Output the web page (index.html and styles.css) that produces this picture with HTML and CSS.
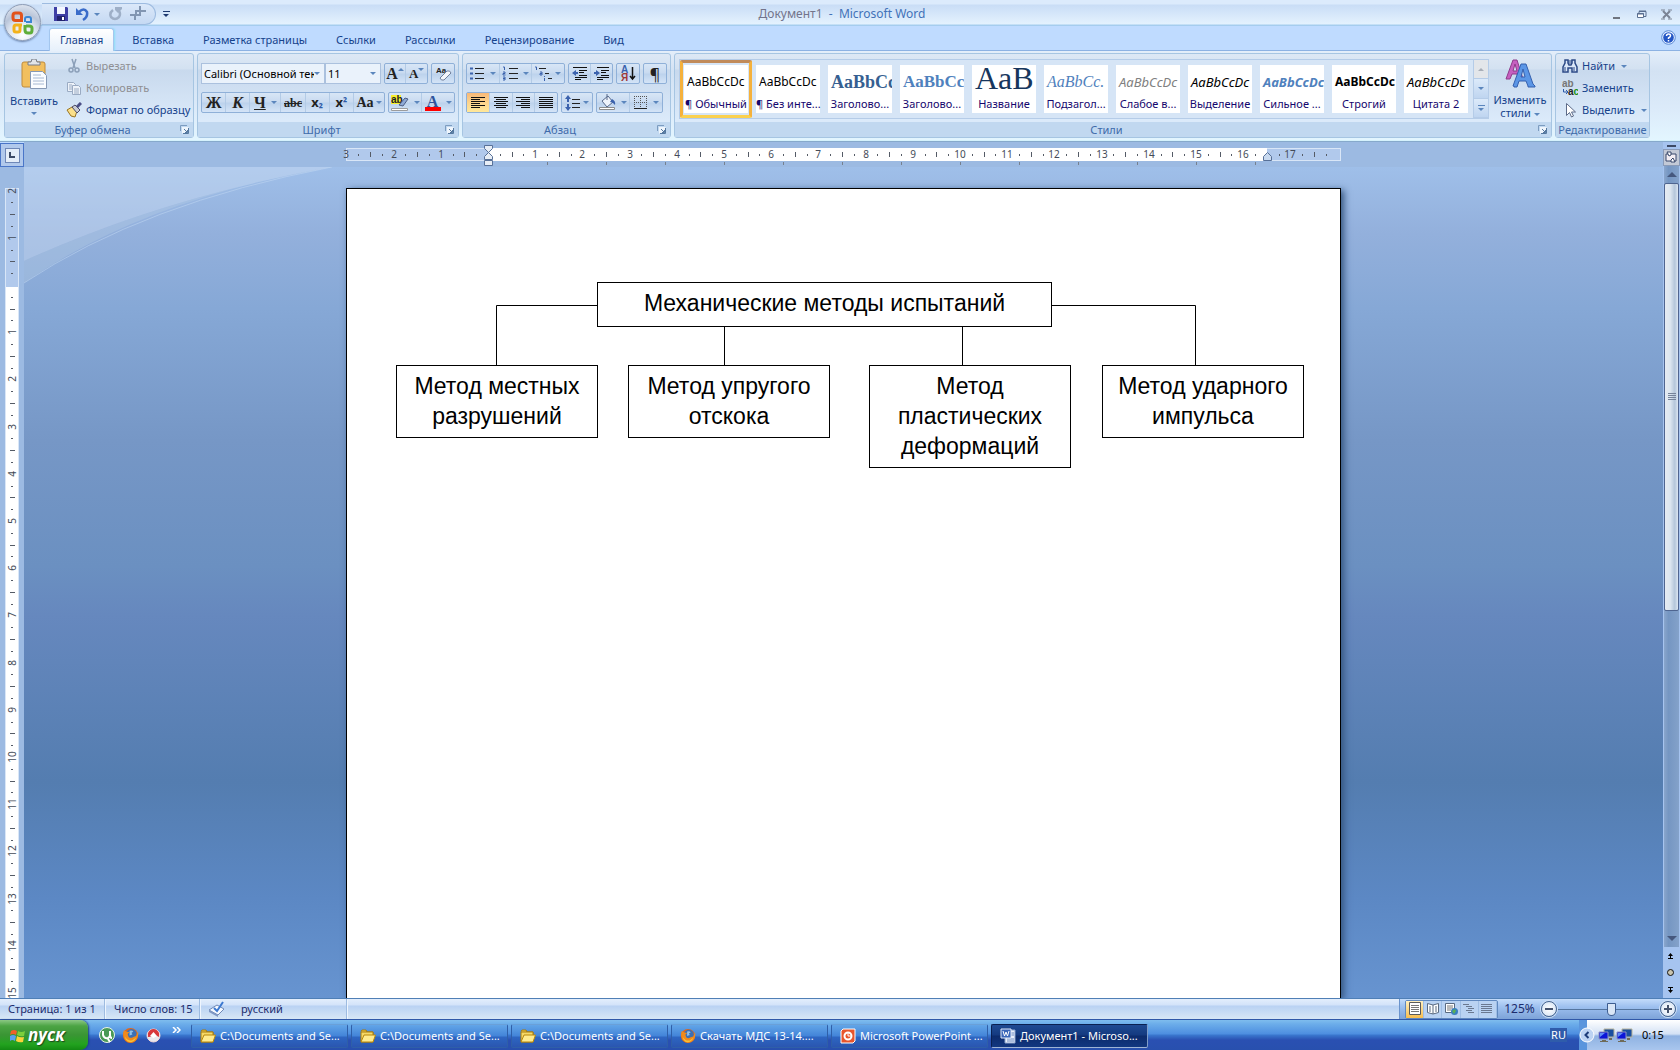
FILE: index.html
```html
<!DOCTYPE html>
<html lang="ru">
<head>
<meta charset="utf-8">
<title>Документ1 - Microsoft Word</title>
<link rel="stylesheet" href="styles.css">
</head>
<body>
<svg class="defs" aria-hidden="true">
  <defs>
    <symbol id="folder" viewBox="0 0 16 16"><path d="M1 3.500 2 2h4l1 2h6v3" fill="#f0c83c" stroke="#a87a10"/><path d="M1 14V4h12v10z" fill="#f5d867" stroke="#a87a10"/><path d="M1 14 4 7h11.500l-2.500 7z" fill="#ffeb8f" stroke="#b8860b"/></symbol>
    <symbol id="firefox" viewBox="0 0 18 18"><circle cx="9" cy="9" r="8" fill="#e0661a"/><circle cx="10" cy="7.500" r="5.500" fill="#3c6fb5"/><path d="M8 4q3-1 4 1l-2 1 1 2-3 1z" fill="#8fc0ea"/><path d="M2 3.500 5 5l3 .5-2 2 1 3q2 2 5 0l3-1 2-5q1 8-4 11-6 3-10-2-3-5-1-10z" fill="#f08a1c"/><path d="M3 10q3 5 8 4l4-3q-2 5-7 5-4-1-5-6z" fill="#f8c23a"/></symbol>
    <symbol id="net" viewBox="0 0 17 15"><path d="M6 1h10v8H6z" fill="#1a4fa0" stroke="#b9b49a"/><path d="M1 4h9v7H1z" fill="#0b15d8" stroke="#8d94c2"/><path d="m2 5 5 0-5 4z" fill="#5f8cf5"/><path d="M4 12h4v1h2v1H2v-1h2zM11 10h3v2h-3z" fill="#6f6b58"/></symbol>
    <symbol id="launch" viewBox="0 0 9 9"><path d="M.5 6V.5H7" fill="none" stroke="#7c9cc0"/><path d="M2 2h6.500v6.500H2z" fill="#eef5fc"/><path d="M8.500 3v5.500H3M4 4l3.500 3.500M7.500 5v2.500H5" fill="none" stroke="#55789f"/></symbol>
  </defs>
</svg>

<header class="titlebar">
  <div class="qat-wrap">
    <div class="qat">
      <button aria-label="Сохранить"><svg width="14" height="14" viewBox="0 0 14 14"><path d="M0 0h13l1 1v13H0z" fill="#3f3fa5"/><path d="M3 0h8v7H3z" fill="#f4f7ff"/><path d="M3 9h8v5H3z" fill="#23236e"/><path d="M8 10h2v3H8z" fill="#fff"/></svg></button>
      <button aria-label="Отменить"><svg width="13" height="15" viewBox="0 0 13 15"><path d="M3 5q5-5 8 0 1 5-4 8" fill="none" stroke="#3a6cc9" stroke-width="2.500"/><path d="M0 1v7h7z" fill="#3a6cc9"/></svg></button>
      <i class="caret qat-caret"></i>
      <button aria-label="Повторить"><svg width="13" height="14" viewBox="0 0 13 14"><path d="M4 3q-4 3-2 7 4 4 8 0 2-3 0-6" fill="none" stroke="#9eafc7" stroke-width="2.500"/><path d="M6 0h7v2L9 6 6 3z" fill="#9eafc7"/></svg></button>
      <button aria-label="Соединить"><svg width="16" height="16" viewBox="0 0 16 16"><path d="M0 9h5v5M6 5v4H5M5 5h11M10 0v9H5" fill="none" stroke="#8296b2" stroke-width="2"/></svg></button>
    </div>
    <button class="qat-more" aria-label="Настройка панели"><i class="line"></i><i class="caret dark"></i></button>
  </div>
  <h1 class="title"><span>Документ1</span> &nbsp;-&nbsp; Microsoft Word</h1>
  <div class="winbtns">
    <button aria-label="Свернуть"><svg width="11" height="11"><path d="M2 9h7" stroke="#6f7580" stroke-width="2"/></svg></button>
    <button aria-label="Восстановить"><svg width="11" height="11"><path d="M3 4V2.500h7v5H8M3 2h7" fill="none" stroke="#5a6f90"/><path d="M1.500 4.500h6v4h-6zM1 5h7" fill="#fff" stroke="#5a6f90"/></svg></button>
    <button aria-label="Закрыть"><svg width="11" height="11"><path d="m2 2 7 7M9 2 2 9" stroke="#7b8494" stroke-width="2"/><path d="M0 1h4M7 1h4M0 10h4M7 10h4" stroke="#7b8494"/></svg></button>
  </div>
</header>
<button class="office" aria-label="Кнопка Office"><svg width="24" height="24" viewBox="0 0 24 24" fill="none" stroke-width="3"><path d="M11 9.500H4.500Q2 9.500 2 7V4.500Q2 2 4.500 2H8q2.500 0 2.500 2.500V11" stroke="#e2531b"/><path d="M14 11V8q0-2 2-2h2q2 0 2 2v3h-5" stroke="#3a86d4" stroke-width="2"/><path d="M11 14H5q-2 0-2 2v3q0 2 2 2h2q2 0 2-2v-4" stroke="#f3b21b"/><path d="M14 14v5q0 3 3 3h2q2 0 2-3v-2q0-2-3-2h-3" stroke="#5fae3a"/></svg></button>

<nav class="tabs">
  <button class="tab active">Главная</button><button class="tab">Вставка</button><button class="tab">Разметка страницы</button><button class="tab">Ссылки</button><button class="tab">Рассылки</button><button class="tab">Рецензирование</button><button class="tab">Вид</button>
  <button class="help" aria-label="Справка"><svg width="15" height="15" viewBox="0 0 15 15"><circle cx="7.500" cy="7.500" r="6.800" fill="#e6f0ff" stroke="#5b8ad6"/><circle cx="7.500" cy="7.500" r="5.300" fill="#2456c5"/><path d="M5.500 6q0-2 2-2t2 1.700q0 1-2 2.300v1M7.500 10v1.500" fill="none" stroke="#fff" stroke-width="1.500"/></svg></button>
</nav>

<section class="ribbon">
  <section class="group g-clip">
    <div class="body clip">
      <button class="big paste"><svg width="27" height="30" viewBox="0 0 27 30"><rect x="1" y="3" width="23" height="25" rx="2" fill="#f2bf5e" stroke="#bf8b3a"/><path d="M7 6V3h3l1-3h4l1 3h3v3z" fill="#e1e4e8" stroke="#767d88"/><path d="M9.500 12.500h12l4 4v13h-16z" fill="#fbfdff" stroke="#8699b5"/><path d="M12 16h8M12 19h11M12 22h11M12 25h11" stroke="#a6b8d2"/></svg><span>Вставить</span><i class="caret"></i></button>
      <div class="list">
        <button class="off"><svg width="16" height="16" viewBox="0 0 16 16" fill="none" stroke="#8b9fb8" stroke-width="1.500"><path d="m6 1 3 9M10 1 7 10"/><circle cx="5" cy="12" r="2"/><circle cx="11" cy="12" r="2"/></svg>Вырезать</button>
        <button class="off"><svg width="16" height="16" viewBox="0 0 16 16" fill="#eef3fa" stroke="#9aabc3"><path d="M1.500 2.500h6l2 2v7h-8z"/><path d="M6.500 5.500h6l2 2v7h-8zM8 9h5M8 11h5M8 13h5M3 5h3M3 7h3M3 9h3"/></svg>Копировать</button>
        <button><svg width="16" height="16" viewBox="0 0 16 16"><path d="m1 8 5-3 5 4-2 6-4-1z" fill="#fbe08a" stroke="#9a7420"/><path d="m6 5 3-2 5 5-3 3z" fill="#c9ccd4" stroke="#4c4c66"/><path d="m11 5 4-4" stroke="#4a4f86" stroke-width="3"/></svg>Формат по образцу</button>
      </div>
    </div>
    <footer><span>Буфер обмена</span><svg width="9" height="9"><use href="#launch"/></svg></footer>
  </section>

  <section class="group g-font">
    <div class="body rows">
      <div class="row">
        <label class="combo c-font"><select aria-label="Шрифт"><option>Calibri (Основной текст)</option></select><i class="caret"></i></label>
        <label class="combo c-size"><select aria-label="Размер"><option>11</option></select><i class="caret"></i></label>
        <div class="set s45 gap"><button class="serif" aria-label="Увеличить размер"><b class="f16">A</b><i class="caret up sup"></i></button><button class="serif" aria-label="Уменьшить размер"><b class="f13">A</b><i class="caret sup"></i></button></div>
        <div class="set s24 gap"><button aria-label="Очистить формат"><svg width="17" height="17" viewBox="0 0 17 17"><text x="1" y="8" class="t8">Aa</text><path d="m5 13 7-7q3-1 4 2l-7 7q-3 1-4-2z" fill="#f2f5fb" stroke="#6f7f9c"/></svg></button></div>
      </div>
      <div class="row">
        <div class="set s184">
          <button class="serif"><b class="f16">Ж</b></button><button class="serif"><b class="f16"><em>К</em></b></button><button class="serif drop"><b class="f16"><u>Ч</u></b><i class="caret"></i></button><button class="serif"><b class="f12"><s>abc</s></b></button><button><b class="f13">x<small>₂</small></b></button><button><b class="f13">x<small>²</small></b></button><button class="serif drop tight"><b class="f14">Aa</b><i class="caret"></i></button>
        </div>
        <div class="set s67 gap">
          <button class="drop" aria-label="Цвет выделения"><svg width="18" height="18" viewBox="0 0 18 18"><path d="M0 1h10v9H0z" fill="#f7f02c"/><text x="0" y="9" class="t10">ab</text><path d="m8 11 6-7 3 1-5 7z" fill="#8fa9d6" stroke="#4d5f86"/><path d="M.5 14.500h16v2H.5z" fill="#fff" stroke="#9c9c9c"/></svg><i class="caret"></i></button>
          <button class="drop" aria-label="Цвет текста"><span class="fcolor serif">A</span><i class="caret"></i></button>
        </div>
      </div>
    </div>
    <footer><span>Шрифт</span><svg width="9" height="9"><use href="#launch"/></svg></footer>
  </section>

  <section class="group g-para">
    <div class="body rows">
      <div class="row">
        <div class="set s99">
          <button class="drop" aria-label="Маркеры"><svg width="16" height="15" viewBox="0 0 16 15"><path d="M6 2.500h9M6 7.500h9M6 12.500h9" stroke="#222"/><path d="M1 1.500h3v2H1zM1 6.500h3v2H1zM1 11.500h3v2H1z" fill="#3b62ad"/></svg><i class="caret"></i></button>
          <button class="drop" aria-label="Нумерация"><svg width="16" height="15" viewBox="0 0 16 15"><path d="M7 2.500h9M7 7.500h9M7 12.500h9" stroke="#222"/><path d="M1 1h1.500v3M1 6h2v1.500H1V9h2.500M1 11h2v3H1M1 12.500h2" fill="none" stroke="#3b62ad"/></svg><i class="caret"></i></button>
          <button class="drop tight" aria-label="Многоуровневый список"><svg width="18" height="15" viewBox="0 0 18 15"><path d="M4 2.500h7M10 7.500h4M13 12.500h4" stroke="#222"/><path d="M0 1h1.500v3M5 6h2v3H5V7.500h2M9.500 10v1M9.500 12v3" fill="none" stroke="#3b62ad"/></svg><i class="caret"></i></button>
        </div>
        <div class="set s45 gap">
          <button aria-label="Уменьшить отступ"><svg width="16" height="15" viewBox="0 0 16 15"><path d="M1 1.500h14M7 4.500h8M7 6.500h5M7 9.500h8M3 11.500h12M3 13.500h6" stroke="#111"/><path d="m0 7 4-3v2h2v2H4v2z" fill="#3b62ad"/></svg></button>
          <button aria-label="Увеличить отступ"><svg width="16" height="15" viewBox="0 0 16 15"><path d="M3 1.500h12M7 4.500h8M7 6.500h5M7 9.500h8M3 11.500h12M3 13.500h6" stroke="#111"/><path d="M6 7 2 4v2H0v2h2v2z" fill="#3b62ad"/></svg></button>
        </div>
        <div class="set s24 gap"><button aria-label="Сортировка"><svg width="16" height="17" viewBox="0 0 16 17"><text x="1" y="8" class="t10 blue">А</text><text x="1" y="16" class="t10 red">Я</text><path d="M12.500 2v12M10 11l2.500 3 2.500-3" fill="none" stroke="#111" stroke-width="1.500"/></svg></button></div>
        <div class="set s24 gap"><button aria-label="Знаки абзаца"><b class="f16 pil">¶</b></button></div>
      </div>
      <div class="row">
        <div class="set s92">
          <button class="on" aria-label="По левому краю"><svg width="14" height="13"><path d="M0 1.500h14M0 3.500h9M0 5.500h14M0 7.500h9M0 9.500h14M0 11.500h9" stroke="#111"/></svg></button>
          <button aria-label="По центру"><svg width="14" height="13"><path d="M0 1.500h14M2 3.500h10M0 5.500h14M2 7.500h10M0 9.500h14M2 11.500h10" stroke="#111"/></svg></button>
          <button aria-label="По правому краю"><svg width="14" height="13"><path d="M0 1.500h14M5 3.500h9M0 5.500h14M5 7.500h9M0 9.500h14M5 11.500h9" stroke="#111"/></svg></button>
          <button aria-label="По ширине"><svg width="14" height="13"><path d="M0 1.500h14M0 3.500h14M0 5.500h14M0 7.500h14M0 9.500h14M0 11.500h14" stroke="#111"/></svg></button>
        </div>
        <div class="set s32 gap"><button class="drop tight" aria-label="Интервал"><svg width="16" height="16" viewBox="0 0 16 16"><path d="M7 4.500h8M7 8.500h8M7 12.500h8" stroke="#222"/><path d="m3 0 3 4H4v3H2V4H0zM3 16l3-4H4V9H2v3H0z" fill="#3b62ad"/></svg><i class="caret"></i></button></div>
        <div class="set s67 gap">
          <button class="drop" aria-label="Заливка"><svg width="17" height="17" viewBox="0 0 17 17"><path d="m3 7 6-5 5 6-6 5z" fill="#eef3fb" stroke="#56688a"/><path d="M8 0v6" stroke="#56688a"/><path d="M13 5q4 2 3 6-2-3-5-3z" fill="#3b62ad"/><path d="M.5 13.500h15v2H.5z" fill="#fff" stroke="#8c8c8c"/></svg><i class="caret"></i></button>
          <button class="drop" aria-label="Границы"><svg width="14" height="14"><path d="M.5 0v12M6.500 0v12M12.500 0v12M0 .5h13M0 6.500h13" stroke="#555" stroke-dasharray="1 1"/><path d="M0 12.500h13" stroke="#222"/></svg><i class="caret"></i></button>
        </div>
      </div>
    </div>
    <footer><span>Абзац</span><svg width="9" height="9"><use href="#launch"/></svg></footer>
  </section>

  <section class="group g-styles">
    <div class="body styles">
      <div class="gallery">
        <button class="style sel"><span class="smp">AaBbCcDc</span><span class="nm">¶ Обычный</span></button>
        <button class="style"><span class="smp">AaBbCcDc</span><span class="nm">¶ Без инте...</span></button>
        <button class="style"><span class="smp h1s">AaBbCc</span><span class="nm">Заголово...</span></button>
        <button class="style"><span class="smp h2s">AaBbCc</span><span class="nm">Заголово...</span></button>
        <button class="style"><span class="smp ttl">AaB</span><span class="nm">Название</span></button>
        <button class="style"><span class="smp sub">AaBbCc.</span><span class="nm">Подзагол...</span></button>
        <button class="style"><span class="smp weak">AaBbCcDc</span><span class="nm">Слабое в...</span></button>
        <button class="style"><span class="smp ital">AaBbCcDc</span><span class="nm">Выделение</span></button>
        <button class="style"><span class="smp strong">AaBbCcDc</span><span class="nm">Сильное ...</span></button>
        <button class="style"><span class="smp bold">AaBbCcDc</span><span class="nm">Строгий</span></button>
        <button class="style"><span class="smp ital">AaBbCcDc</span><span class="nm">Цитата 2</span></button>
        <div class="gscroll"><button class="dis" aria-label="Вверх"><i class="caret up"></i></button><button aria-label="Вниз"><i class="caret"></i></button><button aria-label="Ещё"><i class="line"></i><i class="caret"></i></button></div>
      </div>
      <button class="big change"><svg width="31" height="29" viewBox="0 0 31 29"><path d="M1 20 8 1h4l6 19h-4l-2-5H7l-2 5zM8 12h4l-2-7z" fill="#c65fc0" stroke="#8e3a8a"/><path d="M9 27h-1l8-22h5l7 20 2 2v1h-7v-1l-2-5h-7l-2 6H9zM16 18h4l-2-8z" fill="#5b96e6" stroke="#3560ae"/></svg><span>Изменить</span><span>стили <i class="caret"></i></span></button>
    </div>
    <footer><span>Стили</span><svg width="9" height="9"><use href="#launch"/></svg></footer>
  </section>

  <section class="group g-edit">
    <div class="body list">
      <button><svg width="16" height="16" viewBox="0 0 16 16"><path d="M3 2h3v3l1 2h2l1-2V2h3v3l2 4v5h-5v-4H6v4H1V9l2-4z" fill="#dce8f8" stroke="#2d4a86" stroke-width="1.500"/><path d="M3 9v4M12 9v4M7 2v4M9 2v4" stroke="#2d4a86"/></svg>Найти<i class="caret"></i></button>
      <button><svg width="16" height="16" viewBox="0 0 16 16"><text x="0" y="7" class="t10 grey">ab</text><text x="6" y="15" class="t10">a<tspan fill="#189018">c</tspan></text><path d="M1.500 9v3h4M4 10l2 2-2 2" fill="none" stroke="#2d5aa8"/></svg>Заменить</button>
      <button><svg width="16" height="16" viewBox="0 0 16 16"><path d="M4.500 1.500v12l3-3 2 4.500 2-1-2-4h4z" fill="#fff" stroke="#5d6b88"/></svg>Выделить<i class="caret"></i></button>
    </div>
    <footer><span>Редактирование</span></footer>
  </section>
</section>

<main class="work">
  <button class="tabstop" aria-label="Позиция табуляции"><span><svg width="6" height="6"><path d="M1 0v5h5" fill="none" stroke="#3c4a66" stroke-width="2"/></svg></span></button>
  <div class="hruler"><svg id="hr" width="995" height="25"></svg></div>
  <div class="vruler"><svg id="vr" width="24" height="900"></svg></div>
  <div class="canvas">
    <svg class="swoosh" width="330" height="120" viewBox="0 0 330 120"><path d="M0 0H308Q140 30 0 94z" fill="#d3e2f5" opacity=".4"/><path d="M308 0Q120 32 0 116V94Q140 30 308 0z" fill="#b7cfe6" opacity=".35"/><path d="M308 0Q120 36 0 116" fill="none" stroke="#c4daf3" opacity=".5"/></svg>
    <article class="page">
      <svg class="wires" width="993" height="300"><path d="M250 116.500H149.500V176M377.500 137v39M615.500 137v39M705 116.500h143.500V176" fill="none" stroke="#000"/></svg>
      <div class="node n0">Механические методы испытаний</div>
      <div class="node n1">Метод местных разрушений</div>
      <div class="node n2">Метод упругого отскока</div>
      <div class="node n3">Метод пластических деформаций</div>
      <div class="node n4">Метод ударного импульса</div>
    </article>
  </div>
  <aside class="vscroll">
    <i class="split"></i>
    <button class="rtoggle" aria-label="Линейка"><svg width="13" height="13" viewBox="0 0 13 13"><path d="M1 3h10v7H1z" fill="#f3eef4" stroke="#37476a" stroke-width="1"/><path d="M2 1h4v3l-2 1zM6 9l2-2 2 4H6z" fill="#fff" stroke="#37476a"/></svg></button>
    <div class="track">
      <button aria-label="Вверх"><i class="tri up"></i></button>
      <div class="thumb"><svg width="8" height="8"><path d="M0 .5h8M0 2.500h8M0 4.500h8M0 6.500h8" stroke="#76839a"/></svg></div>
      <span class="fill"></span>
      <button aria-label="Вниз"><i class="tri"></i></button>
    </div>
    <div class="browse">
      <button aria-label="Предыдущая страница"><svg width="5" height="6"><path d="M2.500 0 5 3H3v2h2v1H0V5h2V3H0z"/></svg></button>
      <button aria-label="Выбор объекта"><svg width="7" height="7"><circle cx="3.500" cy="3.500" r="3" fill="#c9c4ae" stroke="#111"/></svg></button>
      <button aria-label="Следующая страница"><svg width="5" height="6"><path d="M2.500 6 0 3h2V1H0V0h5v1H3v2h2z"/></svg></button>
    </div>
  </aside>
</main>

<footer class="status">
  <span class="cell s-page">Страница: 1 из 1</span><span class="cell s-words">Число слов: 15</span><span class="cell s-lang"><svg width="17" height="16" viewBox="0 0 17 16"><path d="m1 9 8-5 7 4-6 6z" fill="#f5f9ff" stroke="#6f88b5"/><path d="m1 9 9 5v2L1 11z" fill="#7f98c4"/><path d="m6 7 3 3 6-9" fill="none" stroke="#3b78d0" stroke-width="2"/></svg>русский</span>
  <span class="grow"></span>
  <div class="zoombar">
    <div class="views">
      <button class="on" aria-label="Разметка страницы"><svg width="12" height="14"><path d="M.5.500h11v12H.5z" fill="#fff" stroke="#5a5a5a"/><path d="M2 3.500h8M2 5.500h8M2 7.500h8M2 9.500h8" stroke="#777"/></svg></button>
      <button aria-label="Режим чтения"><svg width="12" height="14"><path d="M.5 1.500 6 3l5.500-1.500v9L6 12 .5 10.500zM6 3v9" fill="#fff" stroke="#5a6a80"/><path d="M2 5h2M2 7h2M2 9h2M8 5h2M8 7h2M8 9h2" stroke="#5a6a80"/></svg></button>
      <button aria-label="Веб-документ"><svg width="13" height="14"><path d="M.5 1.500h9v9h-9z" fill="#fff" stroke="#5a6a80"/><path d="M2 4h6M2 6h6M2 8h4" stroke="#777"/><circle cx="9.500" cy="9.500" r="3.500" fill="#3a7fc0"/><path d="m7 9 3-2 1 2-2 3z" fill="#58b058"/></svg></button>
      <button aria-label="Структура"><svg width="12" height="14"><path d="M0 2.500h6M3 4.500h6M5 6.500h6M3 8.500h6M5 10.500h6" stroke="#6a7890"/></svg></button>
      <button aria-label="Черновик"><svg width="12" height="14"><path d="M0 2.500h11M0 4.500h11M0 6.500h11M0 8.500h11M0 10.500h11" stroke="#6a7890"/></svg></button>
    </div>
    <button class="pct">125%</button>
    <button class="round" aria-label="Уменьшить"><i class="minus"></i></button>
    <input class="zoom" type="range" min="0" max="200" value="106" aria-label="Масштаб">
    <button class="round plus" aria-label="Увеличить"><i class="minus"></i></button>
  </div>
</footer>

<footer class="taskbar">
  <button class="start"><svg width="15" height="15" viewBox="0 0 15 15"><path d="M1 3q3-2 6 0L6 7Q3 5 0 7z" fill="#f0602a"/><path d="M8 3q3 2 7 0l-1 5q-4 1-7-1z" fill="#7ccf3c"/><path d="M0 8q3-2 6 0l-1 5q-3-2-5 0z" fill="#5aa0f0"/><path d="M7 8q3 2 7 1l-1 5q-4 1-7-1z" fill="#fbd33a"/></svg>пуск</button>
  <div class="quick">
    <a href="#" aria-label="uTorrent"><svg width="16" height="16" viewBox="0 0 16 16"><circle cx="8" cy="8" r="7.500" fill="#4a9a56" stroke="#e8f4e8"/><path d="M4 4v4q1 4 5 3 2-1 2-3V4M11 8q0 3 2 3M9 12l2 3" fill="none" stroke="#fff" stroke-width="2"/></svg></a>
    <a href="#" aria-label="Firefox"><svg width="17" height="17"><use href="#firefox"/></svg></a>
    <a href="#" aria-label="Проигрыватель"><svg width="15" height="15" viewBox="0 0 15 15"><circle cx="7.500" cy="7.500" r="6.500" fill="#e9e9ee" stroke="#f2d8d8"/><path d="M2 9V5q2-4 5.500-4T13 5v4q-3-2-5.500-1T2 9z" fill="#d8383c"/><path d="M7.500 4 11 8l-3.500 2L4 8z" fill="#fff"/></svg></a>
  </div>
  <button class="more" aria-label="Ещё"><svg width="9" height="6"><path d="m1 0 3 3-3 3M5 0l3 3-3 3" fill="none" stroke="#fff" stroke-width="1.500"/></svg></button>
  <nav class="tasks">
    <button><svg width="16" height="16"><use href="#folder"/></svg>C:\Documents and Se...</button>
    <button><svg width="16" height="16"><use href="#folder"/></svg>C:\Documents and Se...</button>
    <button><svg width="16" height="16"><use href="#folder"/></svg>C:\Documents and Se...</button>
    <button><svg width="16" height="16"><use href="#firefox"/></svg>Скачать МДС 13-14....</button>
    <button><svg width="16" height="16" viewBox="0 0 16 16"><path d="M3 1h12v12l-2 2H1V3z" fill="#e8552c" stroke="#fff"/><circle cx="8" cy="8" r="3.500" fill="none" stroke="#fff" stroke-width="2"/><path d="M8 8h4M8 8V4" stroke="#fff"/></svg>Microsoft PowerPoint ...</button>
    <button class="cur"><svg width="16" height="16" viewBox="0 0 16 16"><path d="M5 2h10v13H5z" fill="#e9f0fb" stroke="#8aa3cc"/><path d="M11 5h3M11 7h3M7 11h7M7 13h7" stroke="#6f8cc0"/><path d="M1 1h10v9H1z" fill="#3a66b8" stroke="#dfe8f8"/><path d="m3 3 1.500 5L6 4l1.500 4L9 3" fill="none" stroke="#fff"/></svg>Документ1 - Microso...</button>
  </nav>
  <span class="lang">RU</span>
  <div class="tray">
    <button class="hide" aria-label="Показать значки"><svg width="16" height="16"><circle cx="8" cy="8" r="7" fill="#bcd3f3" stroke="#fff"/><path d="M9.500 5 6.500 8l3 3" fill="none" stroke="#1d3c78" stroke-width="2"/></svg></button>
    <svg width="17" height="15"><use href="#net"/></svg><svg width="17" height="15"><use href="#net"/></svg>
    <time>0:15</time>
  </div>
</footer>
<script src="rulers.js"></script>
</body>
</html>
```
FILE: rulers.js
```js
// Both rulers are drawn from one scale: centimetres at 125% zoom.
const CM = 47.2;
const rect = (x, y, w, h, fill, stroke) =>
  `<rect x="${x}" y="${y}" width="${w}" height="${h}" fill="${fill}" stroke="${stroke}"/>`;

function horizontal() {
  const zero = 142, end = 921;
  let s = rect('0.5', '6.500', 994, 12, '#b1c9ec', '#d9e6f7') + rect(zero, 6, end - zero, 13, '#fff', 'none');
  for (let q = -12; q <= 71; q++) {
    const x = Math.round(zero + q * CM / 4);
    if (q === 0 || q === 66) continue;
    if (q % 4 === 0) s += `<text x="${x}" y="16" text-anchor="middle" class="num">${Math.abs(q / 4)}</text>`;
    else if (q % 2 === 0) s += rect(x, 10, 1, 5, '#555b66', 'none');
    else s += rect(x, 12, 1, 2, '#555b66', 'none');
  }
  for (let i = 1; i <= 13; i++) s += rect(zero + i * 59, 20, 1, 3, '#76808e', 'none');
  s += `<path d="M138.500 3.500h8v3l-4 4 4 4v3h-8v-3l4-4-4-4zM138.500 18.500h8v5h-8z" fill="#e8eef6" stroke="#587198"/>`;
  s += `<path d="M917.500 18.500v-4l4-4 4 4v4z" fill="#c9daf0" stroke="#587198"/>`;
  document.getElementById('hr').innerHTML = s;
}

function vertical() {
  const zero = 118;
  let s = rect('5.500', '21.500', 13, 900, '#b1c9ec', '#d9e6f7') + rect(6, 120, 12, 800, '#fff', 'none');
  for (let q = -8; q <= 64; q++) {
    const y = Math.round(zero + q * CM / 4);
    if (q === 0) continue;
    if (q % 4 === 0) s += `<text transform="translate(16 ${y}) rotate(-90)" text-anchor="middle" class="num">${Math.abs(q / 4)}</text>`;
    else if (q % 2 === 0) s += rect(10, y, 5, 1, '#555b66', 'none');
    else s += rect(11, y, 2, 1, '#555b66', 'none');
  }
  document.getElementById('vr').innerHTML = s;
}

horizontal();
vertical();
```
FILE: styles.css
```css
* { box-sizing: border-box; }
body {
  margin: 0; height: 100vh; display: flex; flex-direction: column; overflow: hidden;
  font: 11px/16px "Noto Sans", sans-serif; color: #15428b; background: #bfdbff;
}
button { font: inherit; color: inherit; background: none; border: 0; padding: 0; margin: 0; display: flex; align-items: center; justify-content: center; white-space: nowrap; }
svg { display: block; flex: none; }
.defs { position: absolute; width: 0; height: 0; }
.caret { width: 0; height: 0; border: 3px solid transparent; border-top-color: #5b86bd; border-bottom: 0; flex: none; display: inline-block; vertical-align: middle; }
.caret.up { border-top: 0; border-bottom: 3px solid #5b86bd; }
.caret.dark { border-top-color: #1d3a70; }
.serif { font-family: "Liberation Serif", serif; color: #222; }
.f12 { font-size: 12px; } .f13 { font-size: 13px; } .f14 { font-size: 14px; } .f16 { font-size: 16px; }
b { color: #222; }
.pil { font-weight: normal; }
small { font-size: 11px; color: #2d5aa8; }
text { font: bold 10px "Liberation Sans", sans-serif; fill: #222; }
.t8 { font-size: 8px; } .t10 { font-size: 10px; }
.blue { fill: #3b62ad; } .red { fill: #a03838; } .grey { fill: #777; }

.titlebar { flex: none; height: 26px; display: grid; grid-template-columns: 1fr auto 1fr; align-items: center; background: linear-gradient(#dcebfc 0 4px, #c9ddf6 5px, #e4f2fe 24px, #a5cdee 25px); }
.qat-wrap { display: flex; align-items: center; padding-left: 42px; height: 26px; }
.qat { display: flex; align-items: center; gap: 8px; height: 22px; width: 114px; padding-left: 12px; border: 1px solid #9dbbe0; border-left: 0; border-radius: 0 11px 11px 0; background: linear-gradient(#dbe8f9, #c5d9f3); }
.qat-caret { margin: 0 1px 0 -3px; }
.qat-more { flex-direction: column; gap: 2px; margin-left: 6px; width: 8px; }
.line { width: 7px; height: 1px; background: #1d3a70; }
.title { margin: 0; padding-left: 4px; font-size: 12px; font-weight: normal; line-height: 28px; color: #4272b8; }
.title span { color: #73748a; }
.winbtns { display: flex; justify-content: flex-end; padding-right: 1px; }
.winbtns button { width: 25px; height: 20px; }
.office { position: absolute; left: 4px; top: 4px; width: 37px; height: 37px; border-radius: 50%; border: 1px solid #8f9db5; background: radial-gradient(circle at 50% 85%, #fff, #dce4f0 40%, #b9c5d9 60%, #eef2f8); box-shadow: 0 1px 2px #6b85ad; }

.tabs { flex: none; height: 25px; display: flex; align-items: flex-end; gap: 7px; padding: 0 4px 0 49px; border-bottom: 1px solid #8db2e3; background: #bfdbff; }
.tab { height: 22px; padding: 0 10px; border: 1px solid transparent; border-bottom: 0; }
.tab.active { border-color: #a4c6ee; border-radius: 3px 3px 0 0; background: linear-gradient(#fff, #e6f0fb); box-shadow: 1px 0 2px #8fe0f5; margin-bottom: -1px; height: 23px; }
.help { margin: 0 0 5px auto; }

.ribbon { flex: none; height: 91px; display: flex; gap: 3px; padding: 2px 4px 3px; background: linear-gradient(#e4eefa, #d3e2f3 20px, #dcebfa 60px, #e3f6ff); border-bottom: 1px solid #86a9cb; box-shadow: inset 0 -1px #d5f2fc; }
.group { display: flex; flex-direction: column; border: 1px solid #a6c5e2; border-radius: 3px; background: linear-gradient(#dde8f5, #d3e1f1 15px, #c8d9ed 16px, #dbeafa 66px); flex: none; }
.g-clip { width: 190px; } .g-font { width: 262px; } .g-para { width: 209px; } .g-styles { width: 878px; } .g-edit { width: 95px; }
.group .body { height: 68px; flex: none; }
.group footer { height: 15px; flex: none; display: flex; align-items: center; background: #c1d8f0; color: #3e6aaa; padding-right: 4px; }
.group footer span { flex: 1; text-align: center; white-space: nowrap; }
.g-edit footer { padding-right: 0; }
.clip { display: flex; }
.big { flex-direction: column; justify-content: flex-start; line-height: 13px; }
.paste { width: 58px; padding-top: 5px; gap: 5px; }
.list { display: flex; flex-direction: column; padding: 1px 0 0 3px; }
.list button { height: 22px; justify-content: flex-start; gap: 4px; }
.list .caret { margin-left: 2px; }
.g-edit .list { padding-left: 6px; }
.off { color: #8f8f93; }
.rows { padding: 9px 3px 0; display: flex; flex-direction: column; gap: 8px; }
.row { display: flex; height: 21px; }
.gap { margin-left: 3px; }
.combo { display: flex; align-items: center; border: 1px solid #abc1de; background: #eaf2fb; height: 21px; padding-right: 4px; color: #000; }
.combo select { appearance: none; border: 0; background: none; font: inherit; color: #000; padding: 0 0 0 2px; flex: 1; min-width: 0; height: 19px; }
.c-font { width: 124px; } .c-size { width: 56px; }
.set { display: flex; border: 1px solid #8fb0d8; border-radius: 2px; background: linear-gradient(#d8e6f6, #c8daf0 9px, #bcd2ec 10px, #d4e4f7); }
.set button { flex: 10 1 0; min-width: 0; border-left: 1px solid #b3cbe6; }
.set button:first-child { border-left: 0; }
.set .drop { flex-grow: 13; gap: 5px; }
.set .drop.tight { gap: 2px; }
.set .on { background: linear-gradient(#f8b877, #fdd58d 10px, #ffe89a); }
.s184 { width: 184px; } .s45 { width: 45px; } .s24 { width: 24px; } .s67 { width: 67px; } .s99 { width: 99px; } .s92 { width: 92px; } .s32 { width: 32px; }
.sup { margin-bottom: 8px; }
.fcolor { width: 16px; height: 16px; font-size: 16px; line-height: 13px; font-weight: bold; color: #2f549c; border-bottom: 4px solid #f00; }

.styles { display: flex; padding: 5px 0 0 4px; }
.gallery { display: flex; width: 810px; height: 60px; border: 1px solid #b5cce8; background: #d6e5f6; }
.style { width: 72px; height: 58px; flex: none; display: block; padding: 5px 4px; }
.smp, .nm { display: block; width: 64px; height: 34px; background: #fff; overflow: hidden; padding: 0 3px; font-size: 12px; line-height: 34px; text-align: left; color: #000; }
.nm { height: 14px; font-size: 11px; line-height: 10px; padding: 0; text-align: center; color: #15076e; overflow: visible; }
.sel { border: 3px solid #f5b13c; border-top-color: #c08a5a; border-bottom-color: #fbd14f; border-radius: 2px; padding: 2px 1px; }
.h1s { font: bold 18px/34px "Liberation Serif", serif; color: #365f91; }
.h2s { font: bold 17px/34px "Liberation Serif", serif; color: #4f81bd; }
.ttl { font: 32px/27px "Liberation Serif", serif; color: #17365d; }
.sub { font: italic 16px/34px "Liberation Serif", serif; color: #4f81bd; }
.weak, .ital, .strong { font-size: 13px; font-style: italic; }
.weak { color: #808080; }
.strong { font-weight: bold; color: #4f81bd; } .bold { font-weight: bold; }
.gscroll { margin-left: auto; width: 15px; display: flex; flex-direction: column; border-left: 1px solid #b5cce8; }
.gscroll button { flex: 1; flex-direction: column; gap: 2px; background: linear-gradient(#dceafa, #bfd5f0); border-bottom: 1px solid #b5cce8; }
.gscroll .dis { background: #e3e6ea; }
.gscroll .dis .caret { border-bottom-color: #a8aeb8; }
.gscroll .line { background: #5b86bd; }
.change { width: 60px; margin-left: 1px; }
.change svg { margin-bottom: 5px; }

.work { flex: 1; min-height: 0; display: grid; grid-template: 25px 1fr / 24px 1fr 17px; }
.tabstop { background: #b1c9ec; border: 1px solid #4a76c8; height: 24px; margin-top: 1px; }
.tabstop span { width: 15px; height: 15px; border: 1px solid #6f88b8; background: #e4edf8; display: grid; place-items: center; }
.hruler, .vruler { background: #9cbae2; overflow: hidden; }
.hruler { display: flex; justify-content: center; }
.hruler svg { overflow: visible; }
.num { font: 10px "Noto Sans", sans-serif; fill: #444b58; }
.canvas { position: relative; overflow: hidden; display: flex; justify-content: center; background: linear-gradient(#9fbfe9, #93b0dc 8%, #86a8d6 17%, #7697c6 33%, #6b90c1 48%, #6688be 54%, #547db0 74%, #5c88c4 88%, #6794d0); }
.swoosh { position: absolute; left: 0; top: 0; }
.page { position: relative; width: 995px; margin-top: 21px; border: 1px solid #000; border-bottom: 0; background: #fff; box-shadow: 3px 2px 7px #34557f; }
.wires { position: absolute; left: 0; top: 0; }
.node { position: absolute; top: 176px; width: 202px; border: 1px solid #000; background: #fff; color: #000; padding: 5px 12px 6px; font: 23px/30px "Liberation Sans", sans-serif; text-align: center; }
.n0 { left: 250px; top: 93px; width: 455px; padding: 5px 0 8px; }
.n1 { left: 49px; } .n2 { left: 281px; } .n3 { left: 522px; } .n4 { left: 755px; }

.vscroll { grid-column: 3; grid-row: 1 / 3; display: flex; flex-direction: column; background: #a6c4f0; }
.vruler { grid-row: 2; grid-column: 1; }
.split { height: 2px; margin: 3px 4px 2px; background: #3c4a66; flex: none; }
.rtoggle { height: 17px; background: #c3c9d6; border: 1px solid #8a9bb8; flex: none; }
.track { flex: 1; display: flex; flex-direction: column; margin: 0 1px; background: linear-gradient(90deg, #8aa6cc, #7596c2 30%, #84a2ca); }
.track button { height: 17px; }
.tri { border: 5px solid transparent; border-top-color: #46587e; border-bottom: 0; }
.tri.up { border-top: 0; border-bottom: 5px solid #46587e; }
.thumb { flex: 428 1 0; display: grid; place-items: center; border: 1px solid #4f6590; border-radius: 2px; background: linear-gradient(90deg, #e6ebf2, #dce6f0 40%, #b4c6da 75%, #dce6f2); }
.fill { flex: 320 1 0; }
.browse { height: 51px; display: flex; flex-direction: column; padding-right: 2px; }
.browse button { flex: 1; }

.status { flex: none; height: 22px; display: flex; color: #1c2c6c; border-top: 1px solid #4f7fb6; background: linear-gradient(#e3eefc, #d3e3f9 6px, #b9d2f3 7px, #d8e7f5 20px); border-bottom: 1px solid #3058a8; }
.cell { display: flex; align-items: center; white-space: nowrap; border-right: 1px solid #9dbbe0; box-shadow: 1px 0 #eef5fe; padding-left: 8px; }
.s-page { width: 105px; } .s-words { width: 95px; padding-left: 9px; } .s-lang { width: 147px; gap: 16px; }
.grow { flex: 1; }
.zoombar { width: 281px; display: flex; align-items: center; padding-left: 5px; border-left: 1px solid #6b94cc; background: linear-gradient(#c3dcfb, #9dc0ef 8px, #7da3d8); }
.views { display: flex; width: 93px; height: 19px; border: 1px solid #5f88bf; border-radius: 2px; background: #b9d2f2; }
.views button { flex: 1; border-right: 1px solid #9ebde4; }
.views .on { background: linear-gradient(#fff0c0, #f8bd4d); }
.pct { width: 43px; font-size: 12px; }
.round { width: 16px; height: 16px; border-radius: 50%; border: 1px solid #45648f; background: radial-gradient(#fff, #cfdff2); box-shadow: 0 0 0 1px #cfe0f5; flex: none; position: relative; }
.minus { width: 8px; height: 2px; background: #45526c; }
.plus::after { content: ""; position: absolute; width: 2px; height: 8px; background: #45526c; }
.zoom { appearance: none; width: 101px; height: 16px; margin: 0 1px; background: linear-gradient(#54759f, #54759f) center / 100% 1px no-repeat; }
.zoom::-webkit-slider-thumb { appearance: none; width: 9px; height: 13px; border: 1px solid #3d5d90; border-radius: 1px 1px 5px 5px; background: #d9e6f6; }

.taskbar { flex: none; height: 30px; display: flex; align-items: center; color: #fff; background: linear-gradient(#7fbdee, #6cadea 4px, #4d8ee0 14px, #3a78cf 15px, #2a50b2 20px, #2850ae); }
.start { width: 88px; height: 30px; gap: 3px; padding-right: 13px; border-radius: 0 8px 8px 0; background: linear-gradient(#8cc884, #4ca444 6px, #3a9534 15px, #23a31f 24px, #138a13); box-shadow: 1px 0 2px #1c3f80; font: italic bold 17px/24px "Open Sans", sans-serif; text-shadow: 1px 1px 1px #1a4a1a; }
.quick { display: flex; align-items: center; gap: 7px; margin-left: 11px; }
.more { margin: 0 10px 10px 11px; }
.tasks { display: flex; flex: 1; gap: 3px; align-self: stretch; padding-top: 4px; }
.tasks button { width: 157px; height: 24px; justify-content: flex-start; gap: 4px; padding-left: 8px; border: 1px solid #2f5fa8; border-top-color: #6aa0d8; border-radius: 2px; background: linear-gradient(#62a5e8, #4384d8 11px, #2e66c2 12px, #2a56b0); }
.tasks .cur { background: linear-gradient(#1f4a92, #143a80 10px, #0c2b6c 11px, #123780); border-color: #0a2050 #7f9cc8 #9fb4d4 #0a2050; }
.lang { background: #2f5cab; padding: 0 1px; line-height: 14px; margin-right: 12px; }
.tray { width: 101px; height: 30px; display: flex; align-items: center; gap: 1px; background: linear-gradient(90deg, #5a95dd 8px, transparent 8px), linear-gradient(#fff, #d3e1f5 14px, #8fb2e2 16px, #a9c6ee); color: #000; }
.hide { margin-right: 2px; }
.tray time { margin-left: 8px; }
```
